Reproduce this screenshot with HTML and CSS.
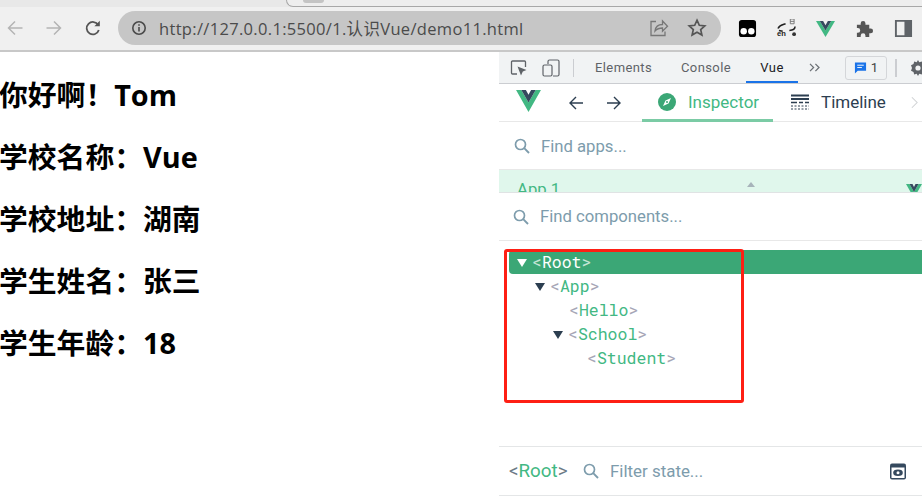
FILE: index.html
```html
<!DOCTYPE html>
<html lang="zh">
<head>
<meta charset="utf-8">
<title>demo11</title>
<link rel="stylesheet" href="styles.css">
</head>
<body>
<div class="tabstrip"><div class="tabshape"><span class="favicon"></span></div></div>
<header class="toolbar">
  <div class="nav">
    <svg class="ic16" viewBox="0 0 18 18"><path d="M16.500 9H2.500M9 2.500 2.500 9 9 15.500" fill="none" stroke="#b4b4b4" stroke-width="1.500"/></svg>
    <svg class="ic16" viewBox="0 0 18 18"><path d="M1.500 9h14M9 2.500 15.500 9 9 15.500" fill="none" stroke="#b4b4b4" stroke-width="1.500"/></svg>
    <svg class="ic16" viewBox="0 0 18 18"><path d="M14.800 11a6.200 6.200 0 1 1-.6-5" fill="none" stroke="#555" stroke-width="1.800"/><path d="M15.800 1.800v5.400h-5.400z" fill="#555"/></svg>
  </div>
  <div class="omnibox">
    <svg class="ic-info" viewBox="0 0 16 16"><circle cx="8" cy="8" r="6.200" fill="none" stroke="#4a4a4a" stroke-width="1.600"/><path d="M8 7v4.500M8 4.300v1.500" stroke="#4a4a4a" stroke-width="1.600"/></svg>
    <span class="url">http://127.0.0.1:5500/1.认识Vue/demo11.html</span>
    <svg class="ic-share" viewBox="0 0 20 20"><path d="M7 3.500H2v14h14v-4" fill="none" stroke="#777" stroke-width="1.300"/><path d="M6 13c.5-4 3.500-6.500 7.500-6.500V3l5 5.300-5 5V10C10 10 8 10.800 6 13z" fill="none" stroke="#777" stroke-width="1.300"/></svg>
    <svg class="ic-star" viewBox="0 0 20 20"><path d="M10 2.200l2.300 5.100 5.500.6-4.100 3.700 1.200 5.400L10 14.200 5.100 17l1.200-5.400L2.200 7.900l5.500-.6z" fill="none" stroke="#555" stroke-width="1.700"/></svg>
  </div>
  <div class="extensions">
    <svg class="ext" viewBox="0 0 20 20"><rect x="1" y="1" width="18" height="18" rx="3" fill="#000"/><circle cx="6" cy="13" r="3.400" fill="#fff"/><circle cx="14" cy="13" r="3.400" fill="#fff"/></svg>
    <svg class="ext wide" viewBox="0 0 22 20"><path d="M2 10c2-4 5-4 8-5M20 8c0 3-3 4-6 4M3 12l4 1" fill="none" stroke="#222" stroke-width="1.600"/><path d="M15 0h4v5h-4zM15 2.500h4" fill="none" stroke="#777"/><circle cx="19" cy="16" r="2" fill="#333"/><text x="1" y="18" class="ext-en">en</text></svg>
    <svg class="ext" viewBox="0 0 20 18"><path d="M0 1h4l6 10 6-10h4L10 18z" fill="#42b883"/><path d="M4 1h3.500L10 5.500 12.500 1H16l-6 10z" fill="#35495e"/></svg>
    <svg class="ext" viewBox="0 0 20 20"><path d="M2 6h4V4.500a2.500 2.500 0 0 1 5 0V6h4v4h1.500a2.500 2.500 0 0 1 0 5H15v4h-4v-1.500a2.500 2.500 0 0 0-5 0V19H2v-4.500h1a2.500 2.500 0 0 0 0-5H2z" fill="#555"/></svg>
    <svg class="ext" viewBox="0 0 20 20"><path d="M2 2h16v16H2z" fill="none" stroke="#5f6368" stroke-width="2"/><path d="M11 2h7v16h-7z" fill="#5f6368"/></svg>
  </div>
</header>
<div class="content">
  <main class="page">
    <h2 class="line">你好啊！Tom</h2>
    <h2 class="line">学校名称：Vue</h2>
    <h2 class="line">学校地址：湖南</h2>
    <h2 class="line">学生姓名：张三</h2>
    <h2 class="line">学生年龄：18</h2>
  </main>
  <aside class="devtools">
    <div class="dt-tabs">
      <svg class="dt-ic first" viewBox="0 0 18 18"><path d="M7 15H2.500a1 1 0 0 1-1-1V3a1 1 0 0 1 1-1h12a1 1 0 0 1 1 1v5" fill="none" stroke="#5f6368" stroke-width="1.300"/><path d="M7.500 7.500l9 3.500-3.700 1.500L11 16.500z" fill="#5f6368"/></svg>
      <svg class="dt-ic" viewBox="0 0 18 18"><path d="M6 5V2.500A1.500 1.500 0 0 1 7.500 1h8A1.500 1.500 0 0 1 17 2.500v13a1.500 1.500 0 0 1-1.500 1.500H11" fill="none" stroke="#5f6368" stroke-width="1.200"/><rect x="1" y="6" width="9" height="11" rx="1.500" fill="none" stroke="#5f6368" stroke-width="1.200"/></svg>
      <span class="sep"></span>
      <span class="dt-tab tab-el">Elements</span>
      <span class="dt-tab tab-con">Console</span>
      <span class="dt-tab tab-vue">Vue</span>
      <svg class="more" viewBox="0 0 12 10"><path d="M1 1l4 4-4 4M7 1l4 4-4 4" fill="none" stroke="#6b7075" stroke-width="1.400"/></svg>
      <span class="issues"><svg class="msg" viewBox="0 0 14 14"><path d="M1 1h12v9H4l-3 3z" fill="#1a73e8"/><path d="M3.500 4h7M3.500 6.500h5" stroke="#fff"/></svg>1</span>
      <span class="sep2"></span>
      <svg class="gear" viewBox="0 0 18 18"><path d="M9 1l1.300 2.300 2.500-.7.700 2.500L16 6.300 15 9l1 2.700-2.500 1.200-.7 2.500-2.500-.7L9 17l-1.300-2.300-2.500.7-.7-2.500L2 11.700 3 9 2 6.300l2.500-1.200.7-2.500 2.500.7z" fill="#5f6368"/><circle cx="9" cy="9" r="2.600" fill="#f1f3f4"/></svg>
    </div>
    <div class="vue-bar">
      <svg class="vue-logo" viewBox="0 0 26 24"><path d="M0 0h5.500L13 13 20.500 0H26L13 23z" fill="#42b883"/><path d="M5.500 0h4.800L13 5l2.700-5h4.800L13 13z" fill="#35495e"/></svg>
      <svg class="arrow a1" viewBox="0 0 16 16"><path d="M15 8H2M8 2 2 8l6 6" fill="none" stroke="#2c3e50" stroke-width="1.400"/></svg>
      <svg class="arrow a2" viewBox="0 0 16 16"><path d="M1 8h13M8 2l6 6-6 6" fill="none" stroke="#2c3e50" stroke-width="1.400"/></svg>
      <div class="vtab active">
        <svg class="compass" viewBox="0 0 18 18"><circle cx="9" cy="9" r="9" fill="#3ba776"/><path d="M13 5 10.500 10.500 5 13 7.500 7.500z" fill="#fff"/><circle cx="9" cy="9" r="1" fill="#3ba776"/></svg>
        <span>Inspector</span>
      </div>
      <div class="vtab">
        <svg class="timeline" viewBox="0 0 18 16"><path d="M0 1.500h18M0 5h18" stroke="#2c3e50" stroke-width="2"/><path d="M0 8.500h6M8 8.500h4M14 8.500h4" stroke="#2c3e50" stroke-width="1.500"/><path d="M0 12h18M0 15h18" stroke="#2c3e50" stroke-dasharray="2 1.500"/></svg>
        <span>Timeline</span>
      </div>
      <svg class="chev" viewBox="0 0 8 14"><path d="M1 1l6 6-6 6" fill="none" stroke="#cfd2d4" stroke-width="1.200"/></svg>
    </div>
    <div class="search apps">
      <svg class="lens" viewBox="0 0 16 16"><circle cx="6.500" cy="6.500" r="5" fill="none" stroke="#7d9cac" stroke-width="1.700"/><path d="M10.200 10.200 15 15" stroke="#7d9cac" stroke-width="1.900"/></svg>
      <span>Find apps...</span>
    </div>
    <div class="app-row">
      <span class="app-name">App 1</span>
      <span class="caret-up"></span>
      <svg class="app-logo" viewBox="0 0 16 14"><path d="M0 0h3.500L8 8l4.500-8H16L8 14z" fill="#42b883"/><path d="M3.500 0h3L8 3l1.500-3h3L8 8z" fill="#35495e"/></svg>
    </div>
    <div class="search comps">
      <svg class="lens" viewBox="0 0 16 16"><circle cx="6.500" cy="6.500" r="5" fill="none" stroke="#7d9cac" stroke-width="1.700"/><path d="M10.200 10.200 15 15" stroke="#7d9cac" stroke-width="1.900"/></svg>
      <span>Find components...</span>
    </div>
    <div class="tree">
      <div class="node selected lvl0"><i class="tri"></i><span class="br">&lt;</span><span class="nm">Root</span><span class="br">&gt;</span></div>
      <div class="node lvl1"><i class="tri"></i><span class="br">&lt;</span><span class="nm">App</span><span class="br">&gt;</span></div>
      <div class="node lvl2"><span class="br">&lt;</span><span class="nm">Hello</span><span class="br">&gt;</span></div>
      <div class="node lvl2 has"><i class="tri"></i><span class="br">&lt;</span><span class="nm">School</span><span class="br">&gt;</span></div>
      <div class="node lvl3"><span class="br">&lt;</span><span class="nm">Student</span><span class="br">&gt;</span></div>
    </div>
    <div class="state-bar">
      <span class="sel-name"><span class="br2">&lt;</span><span class="nm2">Root</span><span class="br2">&gt;</span></span>
      <svg class="lens" viewBox="0 0 16 16"><circle cx="6.500" cy="6.500" r="5" fill="none" stroke="#7d9cac" stroke-width="1.700"/><path d="M10.200 10.200 15 15" stroke="#7d9cac" stroke-width="1.900"/></svg>
      <span class="filter">Filter state...</span>
      <svg class="eye" viewBox="0 0 16 16"><rect width="16" height="16" rx="2" fill="#35495e"/><rect x="1.500" y="4" width="13" height="10.500" fill="#fff"/><ellipse cx="8" cy="9.200" rx="4.800" ry="3.200" fill="#35495e"/><circle cx="8" cy="9.200" r="1.500" fill="#fff"/></svg>
    </div>
  </aside>
</div>
<div class="highlight"></div>
</body>
</html>
```
FILE: styles.css
```css
* { box-sizing: border-box; }
html, body { margin: 0; height: 499px; overflow: hidden; background: #fff; }
body { position: relative; font-family: Roboto, "Noto Sans CJK SC", sans-serif; }

.tabstrip { height: 7px; background: #e8e8e8; overflow: hidden; }
.tabshape { height: 7px; margin-left: 286px; padding-left: 16px; border: 1px solid #a8a8a8; border-top: 0; border-right: 0; border-radius: 0 0 0 7px; background: #eee; }
.favicon { display: block; width: 21px; height: 3px; border-radius: 0 0 11px 11px; background: #c4c4c4; }
.toolbar { height: 45px; background: #f0f0f0; border-bottom: 2px solid #c8c8c8; display: flex; align-items: center; padding: 0 0 1px 6px; }
.nav { display: flex; gap: 21px; width: 112px; align-items: center; }
.ic16 { width: 18px; height: 18px; flex: none; }
.omnibox { width: 603px; height: 34px; border-radius: 17px; background: #c6c6c6; display: flex; align-items: center; padding-left: 13px; flex: none; }
.ic-info { width: 16px; height: 16px; flex: none; }
.url { font-family: "Open Sans", "Noto Sans CJK SC", sans-serif; font-size: 16.500px; color: #4b4b4b; margin-left: 12px; width: 473px; white-space: nowrap; letter-spacing: .32px; }
.ic-share { width: 20px; height: 20px; margin-left: 17px; flex: none; }
.ic-star { width: 20px; height: 20px; margin-left: 18px; flex: none; }
.extensions { display: flex; gap: 20px; align-items: center; margin-left: 17px; }
.ext { width: 19px; height: 19px; flex: none; }
.ext.wide { width: 21px; margin: 0 -1px; }
.ext-en { font: bold 8px "Liberation Sans", sans-serif; fill: #222; }

.content { display: flex; height: 447px; }
.page { width: 499px; flex: none; padding-top: 23px; margin-left: -1px; }
.line { margin: 0 0 21.900px; height: 40px; line-height: 40px; font-family: "Open Sans", "Noto Sans CJK SC", sans-serif; font-size: 28.800px; font-weight: 700; color: #000; white-space: nowrap; }

.devtools { width: 423px; flex: none; display: flex; flex-direction: column; height: 447px; overflow: hidden; margin-left: 1px; }
.dt-tabs { height: 32px; background: #f1f3f4; border-bottom: 1px solid #cbcdd1; display: flex; align-items: center; flex: none; font-size: 13px; color: #5f6368; }
.dt-ic { width: 18px; height: 18px; margin-left: 14px; flex: none; }
.dt-ic.first { margin-left: 11px; }
.sep { width: 1px; height: 18px; background: #cbcdd1; margin: 0 13px 0 13px; flex: none; }
.dt-tab { height: 31px; line-height: 32px; flex: none; letter-spacing: .4px; }
.tab-el { width: 86px; padding-left: 8px; }
.tab-con { width: 73px; padding-left: 8px; }
.tab-vue { width: 52px; text-align: center; color: #202124; border-bottom: 2px solid #1a73e8; }
.more { width: 11px; height: 9px; margin: 0 10px 0 11px; flex: none; }
.issues { width: 42px; height: 24px; margin-left: 15px; border: 1px solid #d4d6d9; border-radius: 3px; display: flex; align-items: center; justify-content: center; gap: 4px; flex: none; color: #444; font-size: 13px; }
.msg { width: 13px; height: 14px; }
.sep2 { width: 1.500px; height: 18px; background: #cbcdd1; margin: 0 0 0 8px; flex: none; }
.gear { width: 18px; height: 18px; flex: none; margin-left: 12px; }

.vue-bar { height: 38px; display: flex; align-items: flex-start; border-bottom: 1px solid #e8e8e8; flex: none; }
.vue-logo { width: 25px; height: 23px; margin: 6px 0 0 17px; flex: none; }
.arrow { width: 16px; height: 16px; margin-top: 11px; flex: none; }
.a1 { margin-left: 27px; }
.a2 { margin-left: 22px; }
.vtab { height: 38px; display: flex; align-items: center; gap: 12px; font-size: 17px; color: #2c3e50; flex: none; padding-bottom: 2px; white-space: nowrap; }
.vtab.active { width: 131px; margin-left: 20px; color: #42b883; padding-left: 16px; border-bottom: 3px solid #7bcba5; padding-bottom: 0; }
.vtab + .vtab { margin-left: 18px; }
.compass { width: 18px; height: 18px; flex: none; }
.timeline { width: 18px; height: 16px; flex: none; }
.chev { width: 7px; height: 13px; margin: 12px 0 0 25px; flex: none; }

.search { display: flex; align-items: center; font-size: 16.700px; color: #7d9cac; flex: none; }
.lens { width: 16px; height: 16px; flex: none; }
.apps { height: 48px; padding: 1px 0 0 15px; gap: 11px; border-bottom: 1px solid #e8e8e8; }
.comps { height: 48px; padding-left: 14px; gap: 11px; border-bottom: 1px solid #e8e8e8; }

.app-row { height: 23px; flex: none; background: #e0f7ec; border-bottom: 1px solid #e0e3e4; display: flex; overflow: hidden; }
.app-name { font-size: 16.700px; color: #42b883; margin: 10px 0 0 18px; line-height: 19px; white-space: nowrap; width: 43px; flex: none; }
.caret-up { width: 0; height: 0; border: 4px solid transparent; border-top: 0; border-bottom: 5px solid #a7b4ba; margin: 12px 0 0 187px; flex: none; }
.app-logo { width: 16px; height: 14px; margin: 14px 0 0 151px; flex: none; }

.tree { height: 206px; flex: none; padding: 9px 0 0 10px; border-bottom: 1px solid #e4e6e7; font-family: "Roboto Mono", "DejaVu Sans Mono", monospace; font-size: 16.500px; line-height: 24px; }
.node { height: 24px; display: flex; align-items: center; white-space: nowrap; }
.tri { width: 0; height: 0; border: 5px solid transparent; border-top: 8px solid #2c3e50; border-bottom: 0; margin: 2px 5px 0 0; flex: none; }
.br { color: #a6a6b6; }
.nm { color: #42b883; }
.selected { background: #3ba776; border-radius: 4px 0 0 4px; padding-left: 8px; }
.selected .tri { border-top-color: #fff; }
.selected .br { color: #c5e5d6; }
.selected .nm { color: #fff; }
.lvl1 { padding-left: 26px; }
.lvl2 { padding-left: 60px; }
.lvl2.has { padding-left: 44px; }
.lvl3 { padding-left: 78px; }

.state-bar { height: 49px; flex: none; border-bottom: 1px solid #e4e6e7; display: flex; align-items: center; padding-left: 10px; font-size: 16.900px; }
.sel-name { width: 74px; flex: none; font-size: 18.800px; }
.br2 { color: #6c7a86; }
.nm2 { color: #42b883; }
.filter { color: #7d9cac; margin-left: 11px; width: 280px; }
.eye { width: 16px; height: 17px; flex: none; }

.highlight { position: absolute; left: 504px; top: 249px; width: 240px; height: 154px; border: 3px solid #fe1f14; border-radius: 3px; }
```
